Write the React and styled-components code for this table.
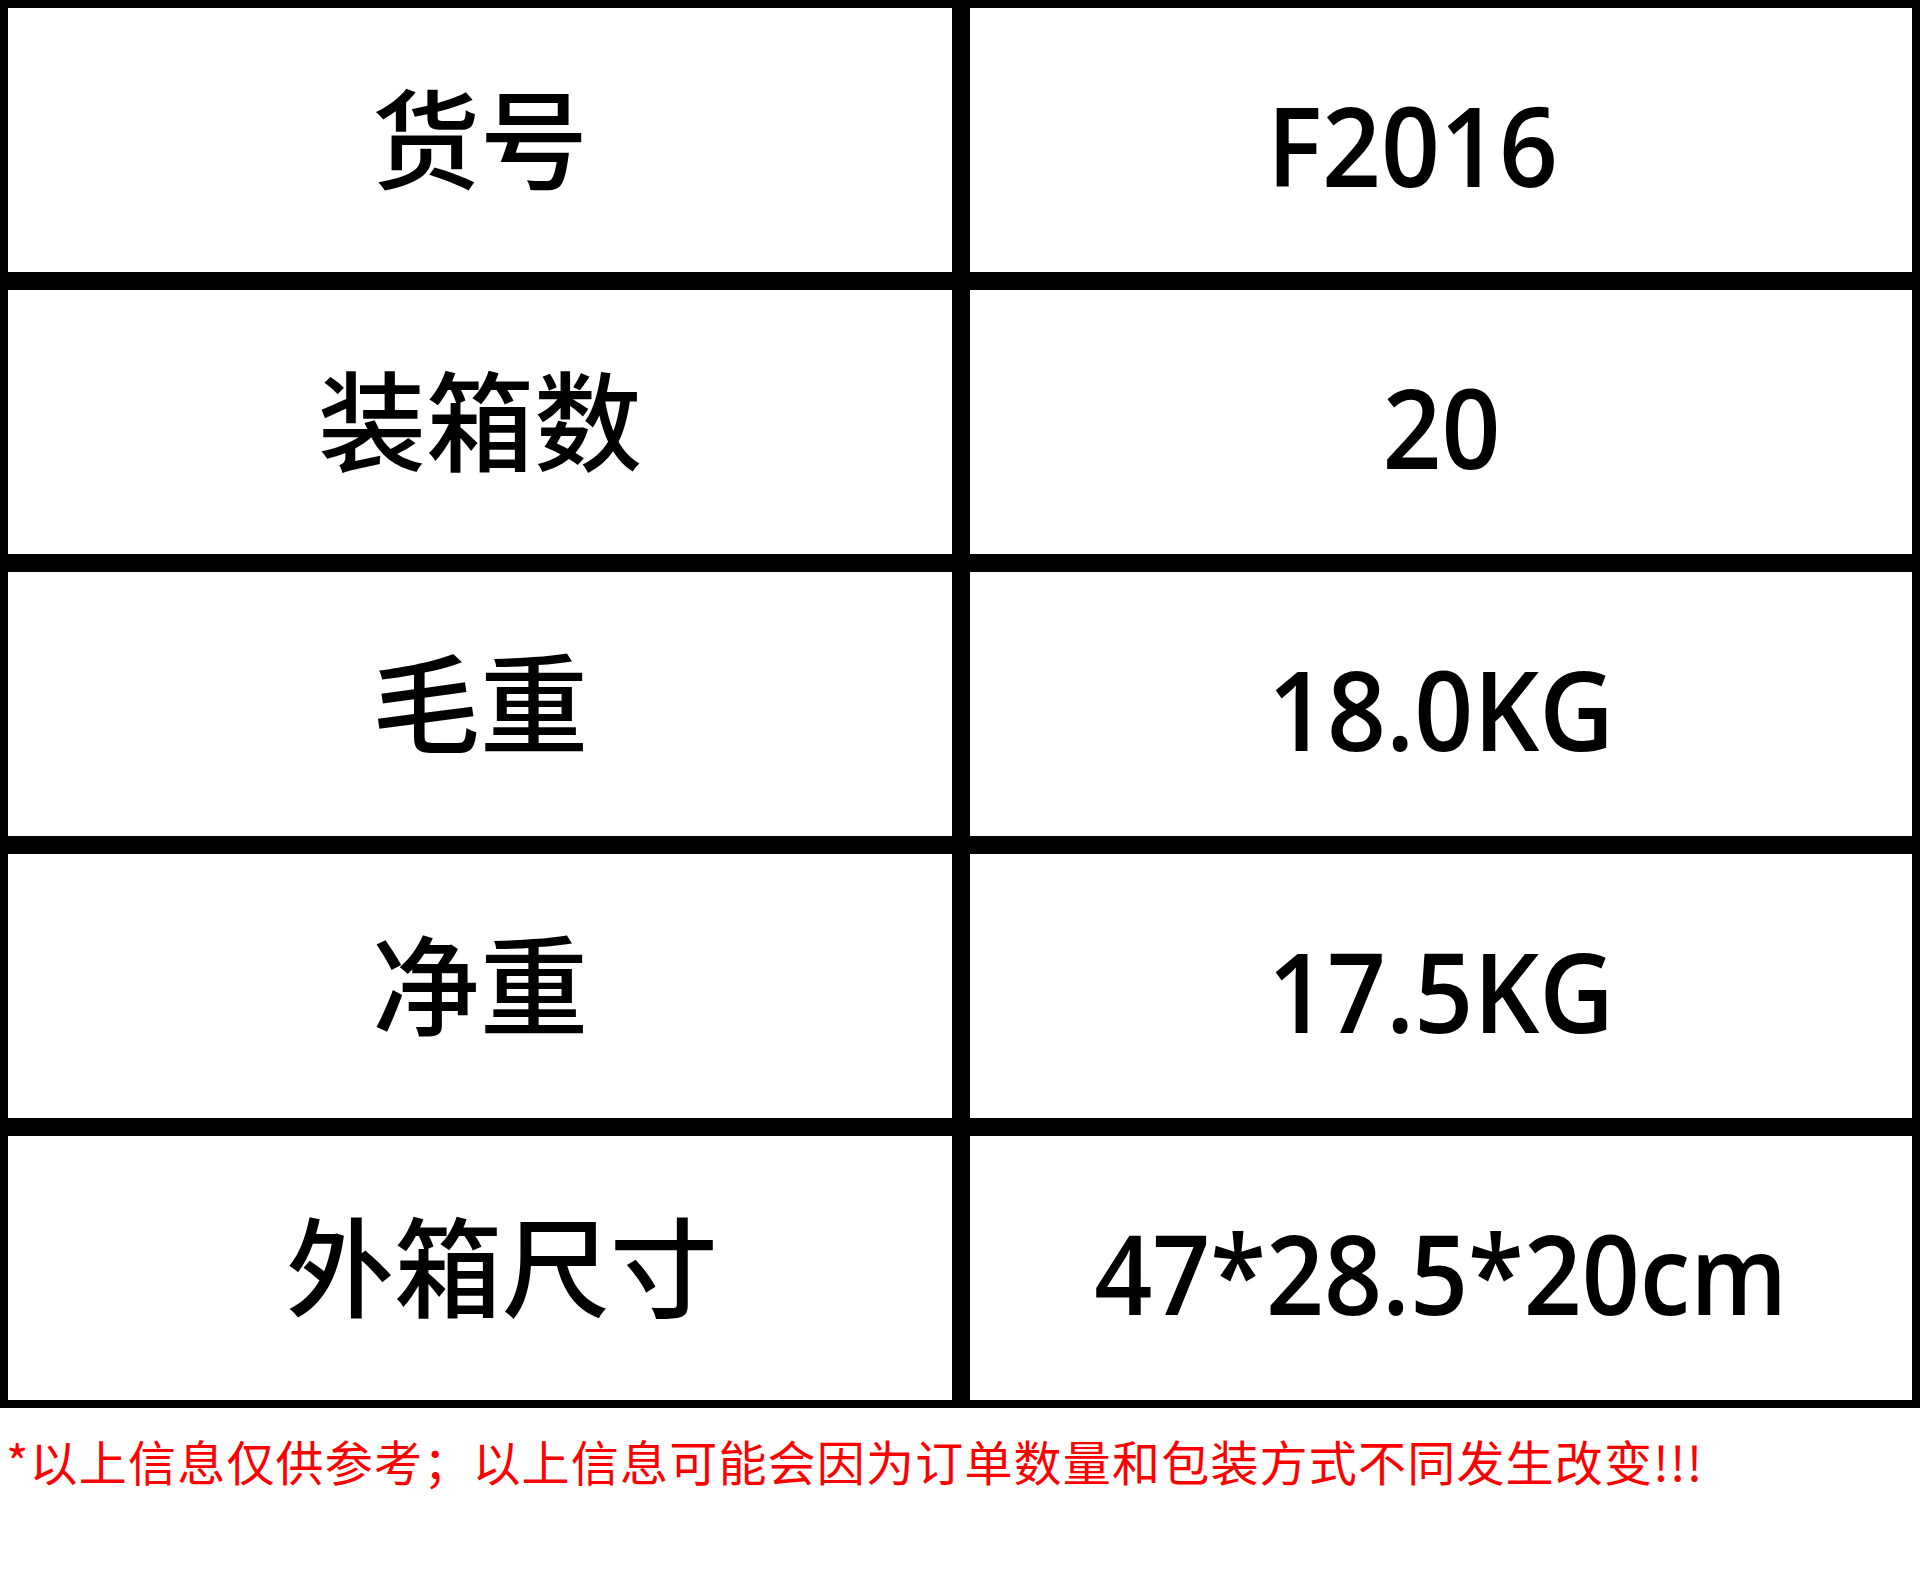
import React from "react";
import styled, { createGlobalStyle } from "styled-components";

const rows = [
  { label: "货号", value: "F2016", valueShift: -28 },
  { label: "装箱数", value: "20" },
  { label: "毛重", value: "18.0KG" },
  { label: "净重", value: "17.5KG" },
  { label: "外箱尺寸", value: "47*28.5*20cm", labelShift: 22, squeeze: 0.915 },
];

function App() {
  return (
    <>
      <GlobalStyle />
      <Page>
        <Table>
          {rows.map((row) => (
            <React.Fragment key={row.label}>
              <Cell>
                <Label $shift={row.labelShift || 0}>{row.label}</Label>
              </Cell>
              <Cell>
                <Value $shift={row.valueShift || 0} $squeeze={row.squeeze || 0.93}>
                  {row.value}
                </Value>
              </Cell>
            </React.Fragment>
          ))}
        </Table>
        <Note>*以上信息仅供参考；以上信息可能会因为订单数量和包装方式不同发生改变!!!</Note>
      </Page>
    </>
  );
}

export default App;

const GlobalStyle = createGlobalStyle`
  body {
    margin: 0;
    background: #fff;
  }
`;

const Page = styled.div`
  width: 1920px;
  min-height: 1589px;
  background: #fff;
`;

const Table = styled.div`
  display: grid;
  grid-template-columns: 944px 942px;
  grid-auto-rows: 264px;
  gap: 18px;
  padding: 8px;
  background: #000;
`;

const Cell = styled.div`
  display: flex;
  align-items: center;
  justify-content: center;
  background: #fff;
  overflow: hidden;
`;

const Label = styled.span`
  font-family: "Noto Sans CJK SC", "Noto Sans", sans-serif;
  font-size: 108px;
  font-weight: 500;
  color: #000;
  line-height: 1;
  padding-bottom: 12px;
  transform: translateX(${(p) => p.$shift}px);
`;

const Value = styled.span`
  font-family: "Open Sans", "Liberation Sans", sans-serif;
  font-size: 111px;
  font-weight: 600;
  color: #000;
  line-height: 1;
  padding-top: 8px;
  white-space: nowrap;
  transform: translateX(${(p) => p.$shift}px) scaleX(${(p) => p.$squeeze});
`;

const Note = styled.p`
  margin: 0;
  padding: 28px 0 0 6px;
  font-family: "Noto Sans CJK SC", sans-serif;
  font-size: 48px;
  letter-spacing: 1.2px;
  line-height: 1;
  color: #ff0000;
  white-space: nowrap;
`;
